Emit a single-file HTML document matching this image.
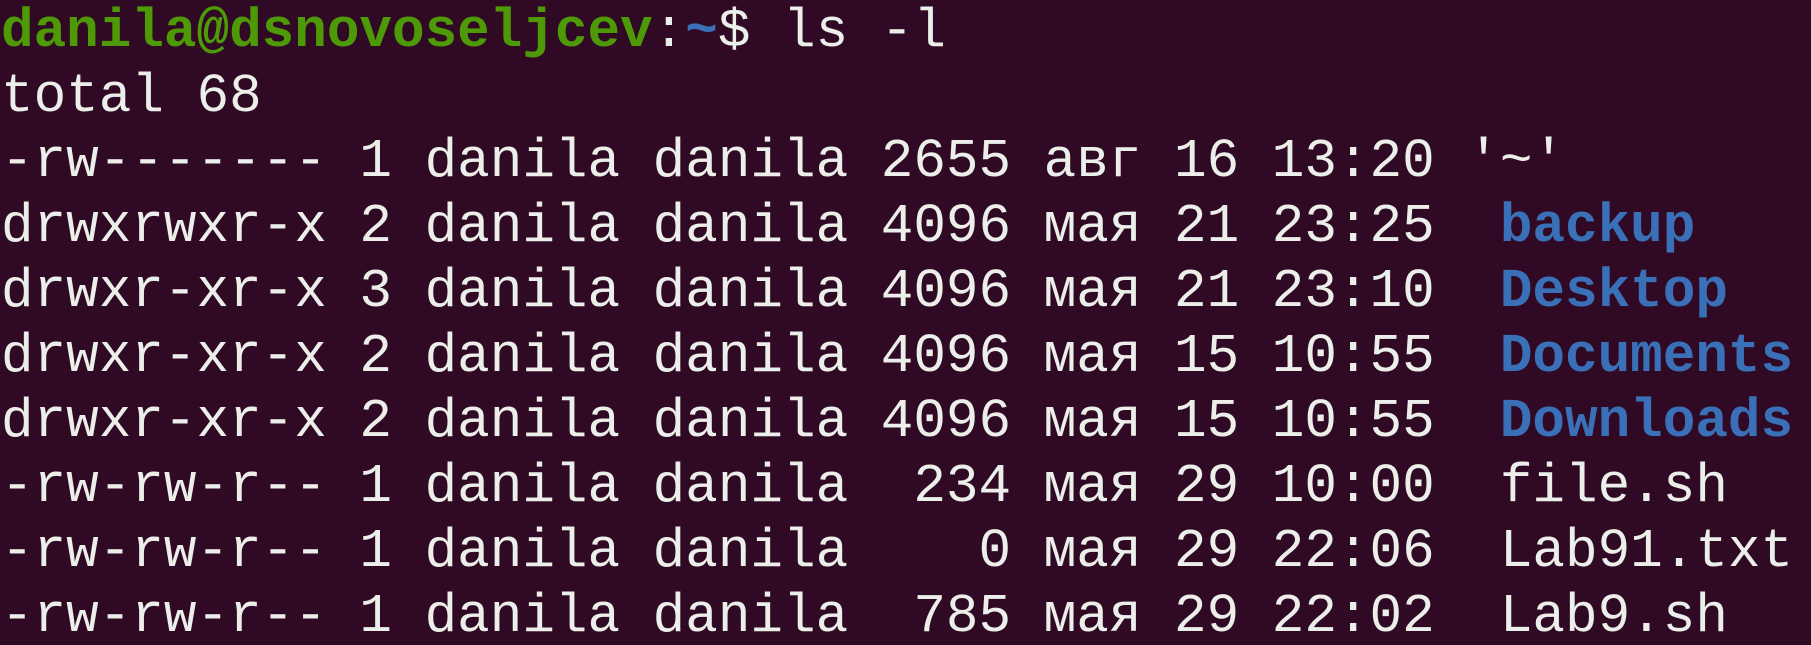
<!DOCTYPE html>
<html><head><meta charset="utf-8"><style>
html,body{margin:0;padding:0;background:#300a24;width:1811px;height:645px;overflow:hidden}
pre{margin:0;padding:0 0 0 1px;font-family:"Liberation Mono",monospace;font-size:54.3px;line-height:65px;color:#eceeea;white-space:pre}
.g{color:#4e9a06;font-weight:bold}
.b{color:#3a70b8;font-weight:bold}
</style></head><body><pre><span class="g">danila@dsnovoseljcev</span>:<span class="b">~</span>$ ls -l
total 68
-rw------- 1 danila danila 2655 авг 16 13:20 '~'
drwxrwxr-x 2 danila danila 4096 мая 21 23:25  <span class="b">backup</span>
drwxr-xr-x 3 danila danila 4096 мая 21 23:10  <span class="b">Desktop</span>
drwxr-xr-x 2 danila danila 4096 мая 15 10:55  <span class="b">Documents</span>
drwxr-xr-x 2 danila danila 4096 мая 15 10:55  <span class="b">Downloads</span>
-rw-rw-r-- 1 danila danila  234 мая 29 10:00  file.sh
-rw-rw-r-- 1 danila danila    0 мая 29 22:06  Lab91.txt
-rw-rw-r-- 1 danila danila  785 мая 29 22:02  Lab9.sh</pre></body></html>
